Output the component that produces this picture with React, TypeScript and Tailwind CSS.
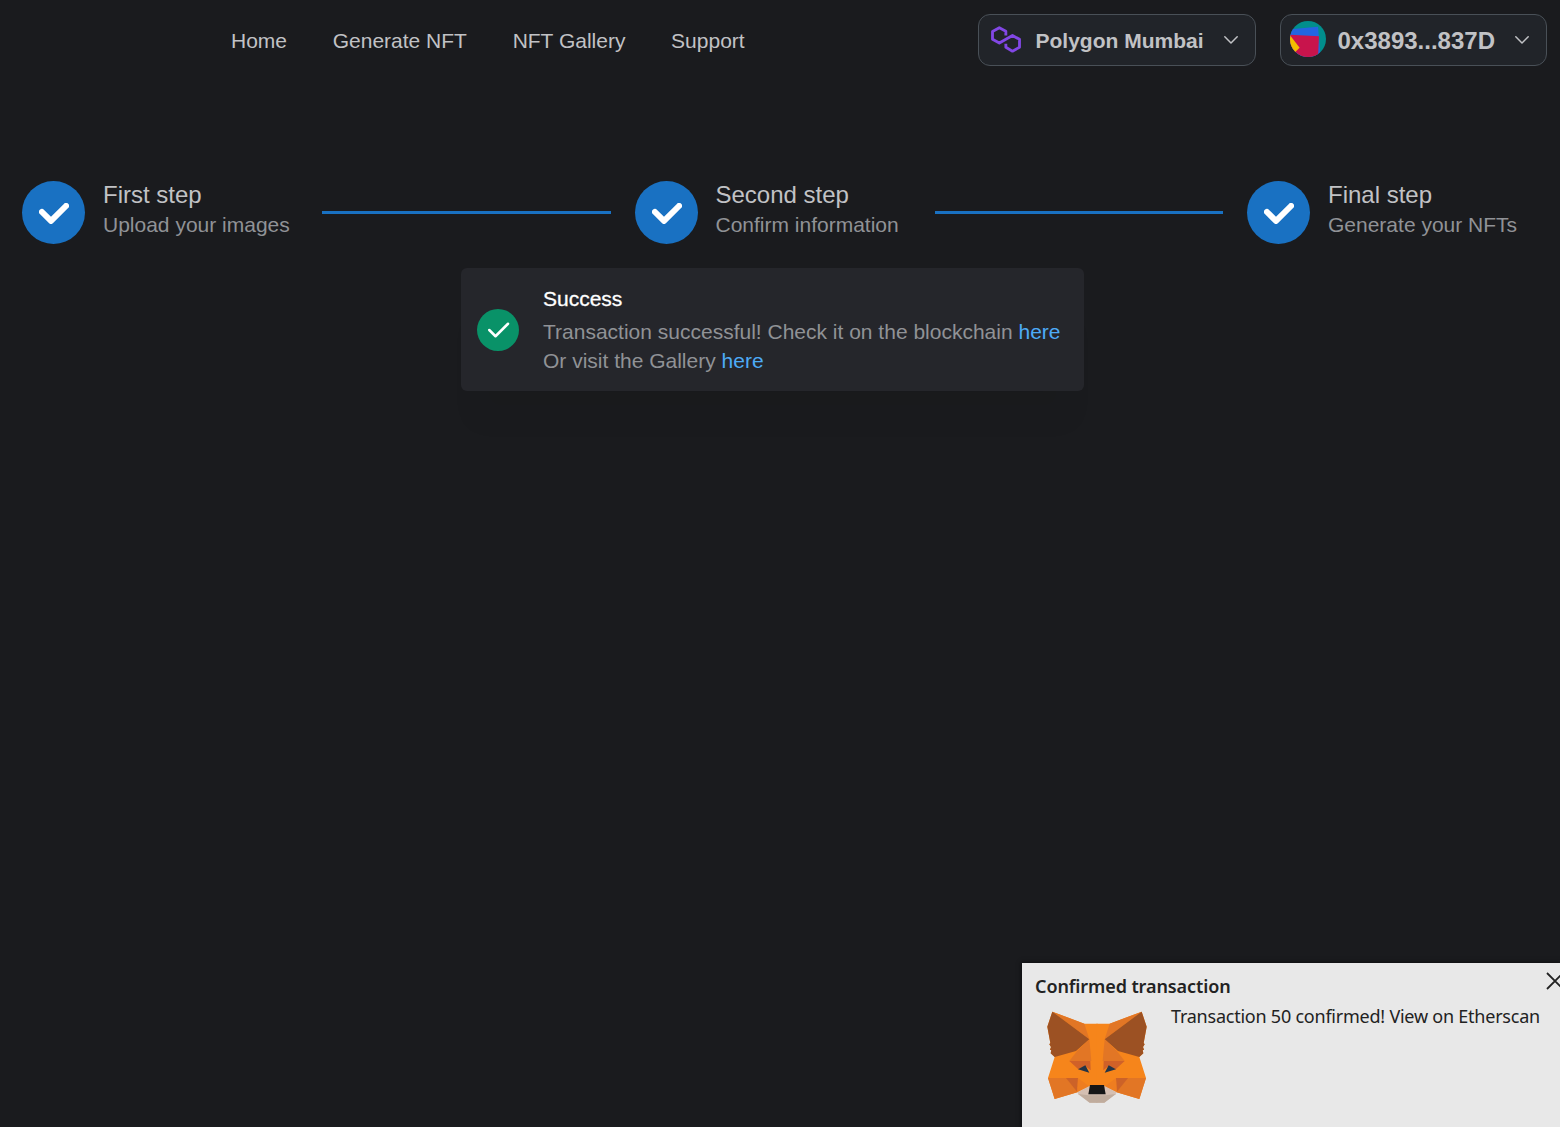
import type { ReactNode } from "react";

const navItems = ["Home", "Generate NFT", "NFT Gallery", "Support"];

const steps = [
  { title: "First step", description: "Upload your images" },
  { title: "Second step", description: "Confirm information" },
  { title: "Final step", description: "Generate your NFTs" },
];

function PolygonLogo() {
  return (
    <svg viewBox="0 0 90 80" className="-mt-0.5 h-[27px] w-[30px]" fill="none" stroke="#8247e5" strokeWidth="8.5" strokeLinejoin="round">
      <path d="M44.500 28V15L25 4.500L4.500 16V39L25 50.500L64.500 28L85.500 39.500V63.500L64.500 75L44.500 63.500V53" />
    </svg>
  );
}

function Chevron() {
  return (
    <svg viewBox="0 0 16 10" className="h-[10px] w-[16px]" fill="none" stroke="#c1c2c5" strokeWidth="1.5" strokeLinecap="round" strokeLinejoin="round">
      <path d="M1.800 1.800L8 8L14.200 1.800" />
    </svg>
  );
}

function Avatar() {
  return (
    <svg viewBox="0 0 108 108" className="size-9">
      <defs>
        <clipPath id="avatar-circle">
          <circle cx="54" cy="54" r="54" />
        </clipPath>
      </defs>
      <g clipPath="url(#avatar-circle)">
        <rect width="108" height="108" fill="#018e8c" />
        <path d="M0 25L84 17L92 108H0Z" fill="#2465e1" />
        <path d="M0 41L87 46L84 108H0Z" fill="#c8144c" />
        <path d="M0 43L29 80L10 98L-10 80Z" fill="#f3be00" />
      </g>
    </svg>
  );
}

function PillButton({ children, className }: { children: ReactNode; className: string }) {
  return (
    <button className={`flex h-[52px] items-center rounded-xl border border-[#495057] bg-[#212429] font-bold ${className}`}>
      {children}
    </button>
  );
}

function StepCheck() {
  return (
    <div className="flex size-[63px] shrink-0 items-center justify-center rounded-full bg-[#1971c2]">
      <svg viewBox="0 0 10 7" className="mt-px ml-px h-[21px] w-[30px]" fill="#fff">
        <path d="M4 4.586L1.707 2.293A1 1 0 1 0 .293 3.707l3 3a.997.997 0 0 0 1.414 0l5-5A1 1 0 1 0 8.293.293L4 4.586z" />
      </svg>
    </div>
  );
}

function FoxHalf() {
  return (
    <>
      <path d="M112 170L208 206H248V395H222L187 412L119 432L99 369L119 306L107 295L109 286L105 284L108 276L103 268L106 264L97 215Z" fill="#f6851b" />
      <path d="M112 170L208 206L223 253Z" fill="#e27625" />
      <path d="M112 170L223 253L183 288L119 306L107 295L109 286L105 284L108 276L103 268L106 264L97 215Z" fill="#9c5123" />
      <path d="M223 253L229 318H163L187 287Z" fill="#e27625" />
      <path d="M163 318H226L227 346L211 333L190 343Z" fill="#d06128" />
      <path d="M99 369H155L187 412L119 432Z" fill="#e27625" />
      <path d="M153 369H189L187 412Z" fill="#cc6228" />
      <path d="M189 369L222 394L187 412Z" fill="#ee7d20" />
      <path d="M189 343L211 331L223 353Z" fill="#233447" />
      <path d="M187 412L222 394H246V443H224L190 418Z" fill="#d5bfb2" />
      <path d="M190 417L221 421H248V443H224Z" fill="#c0ac9d" />
    </>
  );
}

function Fox() {
  return (
    <svg viewBox="90 165 312 282" className="h-[94px] w-[104px] shrink-0">
      <FoxHalf />
      <g transform="translate(492 0) scale(-1 1)">
        <FoxHalf />
      </g>
      <path d="M225 390H267L272 418H220Z" fill="#161616" />
    </svg>
  );
}

function TransactionToast() {
  return (
    <aside className="absolute right-0 bottom-0 h-[164px] w-[538px] overflow-hidden bg-[#e8e8e8] font-['Noto_Sans','Open_Sans',sans-serif] text-[#222] shadow-[0_0_4px_1px_rgba(0,0,0,0.5)]">
      <div className="flex h-[47px] items-start justify-between pl-[13px]">
        <h2 className="mt-[11px] text-[18px] leading-6 font-semibold tracking-[-0.1px] whitespace-nowrap">
          Confirmed transaction
        </h2>
        <svg viewBox="0 0 20 20" className="-mr-[5px] mt-2 size-5" fill="none" stroke="#222" strokeWidth="1.8">
          <path d="M2 2L18 18M18 2L2 18" />
        </svg>
      </div>
      <div className="flex items-start pl-[23px]">
        <Fox />
        <p className="-mt-[6px] ml-[22px] text-[18px] leading-6 tracking-[-0.23px] whitespace-nowrap">Transaction 50 confirmed! View on Etherscan</p>
      </div>
    </aside>
  );
}

export default function App() {
  return (
    <div className="relative h-[1127px] w-[1560px] overflow-hidden bg-[#1a1b1e] font-['Liberation_Sans',Arial,sans-serif] text-[21px] leading-[32px] text-[#c1c2c5]">
      <header className="flex h-20 items-center justify-between pr-[13px] pl-[231px]">
        <nav className="flex gap-[45.7px] pt-0.5">
          {navItems.map((item) => (
            <a key={item} href="#" className="whitespace-nowrap">{item}</a>
          ))}
        </nav>
        <div className="flex gap-6">
          <PillButton className="w-[278px] pl-3">
            <PolygonLogo />
            <span className="mt-0.5 ml-[14.5px] flex-1 text-left whitespace-nowrap">Polygon Mumbai</span>
            <span className="mr-4"><Chevron /></span>
          </PillButton>
          <PillButton className="w-[267px] pl-[9px]">
            <span className="-mt-0.5"><Avatar /></span>
            <span className="mt-0.5 ml-[11.5px] flex-1 text-left text-2xl whitespace-nowrap">0x3893...837D</span>
            <span className="mr-4"><Chevron /></span>
          </PillButton>
        </div>
      </header>

      <main>
        <ol className="mt-[101px] flex items-center pl-[22px]">
          {steps.map((step, index) => (
            <li key={step.title} className="flex h-[63px] w-[612.5px] shrink-0 items-center">
              <StepCheck />
              <div className="ml-[18px] h-[60px] w-[195px] shrink-0">
                <div className="text-2xl leading-6 whitespace-nowrap">{step.title}</div>
                <div className="mt-1 leading-[28px] whitespace-nowrap text-[#909296]">{step.description}</div>
              </div>
              {index < 2 && <div className="mr-6 ml-6 h-[3px] flex-1 bg-[#1971c2]" />}
            </li>
          ))}
        </ol>

        <section className="mt-6 ml-[461px] flex h-[123px] w-[623px] items-center rounded-md bg-[#25262b] pl-4 shadow-[0_42px_24px_-12px_rgba(0,0,0,0.04)]">
          <div className="flex size-[42px] items-center justify-center rounded-full bg-[#099268]">
            <svg viewBox="0 0 24 24" className="size-[30px]" fill="none" stroke="#fff" strokeWidth="2" strokeLinecap="round" strokeLinejoin="round">
              <path d="M5 12l5 5l10-10" />
            </svg>
          </div>
          <div className="ml-6 leading-[29px] whitespace-nowrap text-[#909296]">
            <h1 className="mb-1 text-white [-webkit-text-stroke:0.3px_#fff]">Success</h1>
            <p>Transaction successful! Check it on the blockchain <a href="#" className="text-[#4dabf7]">here</a></p>
            <p>Or visit the Gallery <a href="#" className="text-[#4dabf7]">here</a></p>
          </div>
        </section>
      </main>

      <TransactionToast />
    </div>
  );
}
